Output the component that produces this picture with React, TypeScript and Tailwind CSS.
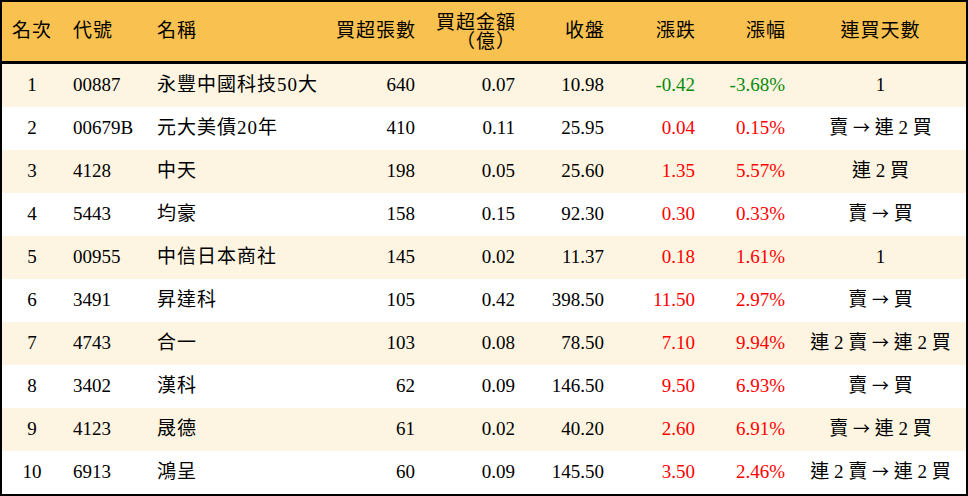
const rows = [
  { rank: '1', code: '00887', name: '永豐中國科技50大', vol: '640', amt: '0.07', close: '10.98', chg: '-0.42', pct: '-3.68%', days: '1' },
  { rank: '2', code: '00679B', name: '元大美債20年', vol: '410', amt: '0.11', close: '25.95', chg: '0.04', pct: '0.15%', days: '賣 → 連 2 買' },
  { rank: '3', code: '4128', name: '中天', vol: '198', amt: '0.05', close: '25.60', chg: '1.35', pct: '5.57%', days: '連 2 買' },
  { rank: '4', code: '5443', name: '均豪', vol: '158', amt: '0.15', close: '92.30', chg: '0.30', pct: '0.33%', days: '賣 → 買' },
  { rank: '5', code: '00955', name: '中信日本商社', vol: '145', amt: '0.02', close: '11.37', chg: '0.18', pct: '1.61%', days: '1' },
  { rank: '6', code: '3491', name: '昇達科', vol: '105', amt: '0.42', close: '398.50', chg: '11.50', pct: '2.97%', days: '賣 → 買' },
  { rank: '7', code: '4743', name: '合一', vol: '103', amt: '0.08', close: '78.50', chg: '7.10', pct: '9.94%', days: '連 2 賣 → 連 2 買' },
  { rank: '8', code: '3402', name: '漢科', vol: '62', amt: '0.09', close: '146.50', chg: '9.50', pct: '6.93%', days: '賣 → 買' },
  { rank: '9', code: '4123', name: '晟德', vol: '61', amt: '0.02', close: '40.20', chg: '2.60', pct: '6.91%', days: '賣 → 連 2 買' },
  { rank: '10', code: '6913', name: '鴻呈', vol: '60', amt: '0.09', close: '145.50', chg: '3.50', pct: '2.46%', days: '連 2 賣 → 連 2 買' },
];

const cols = 'grid grid-cols-[60px_88px_180px_95px_100px_89px_91px_90px_171px] items-center';

// arrow glyph drawn from the CJK font so it is full width like the reference
function Days({ text }: { text: string }) {
  const parts = text.split(' → ');
  if (parts.length === 1) return <>{text}</>;
  return (
    <>
      {parts[0]}{' '}
      <span style={{ fontFamily: '"Noto Sans CJK TC", sans-serif' }} className="text-[17px]">→</span>{' '}
      {parts[1]}
    </>
  );
}

export default function App() {
  return (
    <div
      className="w-[968px] h-[496px] bg-white text-[19px] text-black border-2 border-black overflow-hidden"
      style={{ fontFamily: '"Liberation Serif", "Noto Sans CJK TC", serif' }}
    >
      <div className={`${cols} h-[62px] bg-[#f9c14f] border-b-[3px] border-black tracking-[1px]`}>
        <div className="text-center">名次</div>
        <div className="pl-[11px]">代號</div>
        <div className="pl-[7px]">名稱</div>
        <div className="text-right pr-[9px]">買超張數</div>
        <div className="text-right pr-[9px] leading-[19px] pt-[1px]">
          <div>買超金額</div>
          <div>（億）</div>
        </div>
        <div className="text-right pr-[9px]">收盤</div>
        <div className="text-right pr-[9px]">漲跌</div>
        <div className="text-right pr-[9px]">漲幅</div>
        <div className="text-center">連買天數</div>
      </div>
      {rows.map((r, i) => {
        const down = r.chg.startsWith('-');
        const color = down ? 'text-[#0a8a0a]' : 'text-[#ff0000]';
        return (
          <div key={r.rank} className={`${cols} h-[43px] whitespace-nowrap ${i % 2 === 0 ? 'bg-[#fdf5e1]' : 'bg-white'}`}>
            <div className="text-center">{r.rank}</div>
            <div className="pl-[11px]">{r.code}</div>
            <div className="pl-[7px] tracking-[1px]">{r.name}</div>
            <div className="text-right pr-[10px]">{r.vol}</div>
            <div className="text-right pr-[10px]">{r.amt}</div>
            <div className="text-right pr-[10px]">{r.close}</div>
            <div className={`text-right pr-[10px] ${color}`}>{r.chg}</div>
            <div className={`text-right pr-[10px] ${color}`}>{r.pct}</div>
            <div className="text-center"><Days text={r.days} /></div>
          </div>
        );
      })}
    </div>
  );
}
